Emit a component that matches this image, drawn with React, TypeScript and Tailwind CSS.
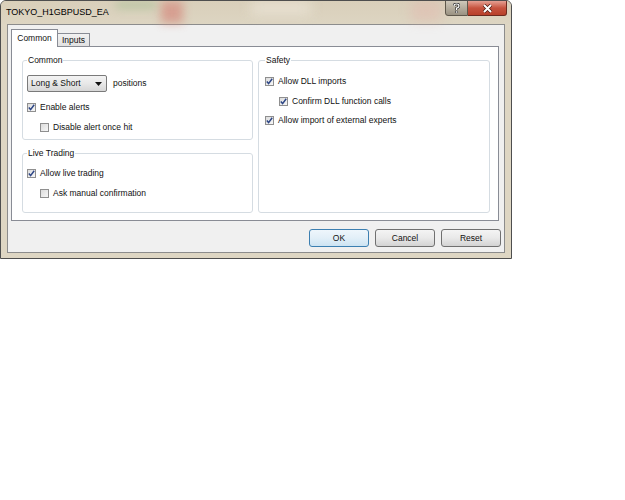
import React from "react";

const font = "font-['Liberation_Sans',Arial,sans-serif]";

function CheckBox({ checked }: { checked?: boolean }) {
  return (
    <span className="flex h-[9px] w-[9px] shrink-0 items-center justify-center border border-[#8f8f8f] bg-gradient-to-br from-[#dcdcdc] to-[#f7f7f7]">
      {checked && (
        <svg width="9" height="9" viewBox="0 0 9 9" className="-m-[1px]">
          <path d="M1.8 4.6 L3.6 6.6 L7.2 1.8" fill="none" stroke="#2d4686" strokeWidth="1.5" />
        </svg>
      )}
    </span>
  );
}

function Option({
  label,
  checked,
  indent,
  className = "",
}: {
  label: string;
  checked?: boolean;
  indent?: boolean;
  className?: string;
}) {
  return (
    <div className={`flex h-[13px] items-center gap-[4px] ${indent ? "pl-[13px]" : ""} ${className}`}>
      <CheckBox checked={checked} />
      <span className="whitespace-nowrap leading-[13px]">{label}</span>
    </div>
  );
}

function Group({
  title,
  className,
  children,
}: {
  title: string;
  className: string;
  children: React.ReactNode;
}) {
  return (
    <fieldset className={`rounded-[3px] border border-[#d5dce2] pl-[4px] ${className}`}>
      <legend className="px-[1px] leading-[10px]">{title}</legend>
      {children}
    </fieldset>
  );
}

function DlgButton({ label, focused }: { label: string; focused?: boolean }) {
  return (
    <button
      className={`flex h-[18px] w-[60px] items-center justify-center rounded-[3px] border leading-none ${
        focused
          ? "border-[#3c7fb1] bg-gradient-to-b from-[#eef6fc] via-[#e2eff8] to-[#cde3f2]"
          : "border-[#707070] bg-gradient-to-b from-[#f4f4f4] via-[#e9e9e9] to-[#d3d3d3]"
      }`}
    >
      {label}
    </button>
  );
}

export default function App() {
  return (
    <div className={`h-[500px] w-[625px] bg-white text-[8.5px] text-[#111] ${font}`}>
      <div className="flex h-[259px] w-[512px] flex-col overflow-hidden rounded-t-[6px] border border-[#4e4e4e] bg-[#ded6c3]">
        {/* title bar over a blurred chart behind the glass */}
        <div className="relative flex h-[23px] items-start bg-gradient-to-b from-[#d9cfba] to-[#ddd5c2]">
          <div className="absolute left-[160px] top-0 h-[22px] w-[22px] bg-[#d48a7e] opacity-70 blur-[5px]" />
          <div className="absolute left-[115px] top-0 h-[8px] w-[40px] bg-[#9fbf8f] opacity-50 blur-[4px]" />
          <div className="absolute left-[410px] top-0 h-[20px] w-[30px] bg-[#e2b8ae] opacity-50 blur-[6px]" />
          <div className="absolute left-[250px] top-0 h-[14px] w-[60px] bg-[#ebe5d8] opacity-70 blur-[6px]" />
          <span className="relative mt-[5px] pl-[5px] text-[9px] leading-[12px] text-black">TOKYO_H1GBPUSD_EA</span>
          <div className="relative ml-auto mr-[4px] flex h-[16px] -translate-y-[1px]">
            <div className="flex w-[23px] items-center justify-center rounded-bl-[3px] border border-[#5f584c] bg-[#a9a293] bg-gradient-to-b from-[#cfc8ba] to-[#9a9282]">
              <svg width="7" height="10" viewBox="0 0 7 10">
                <path d="M1 3 Q1 1 3.5 1 Q6 1 6 3 Q6 4.5 3.5 5.2 V7" fill="none" stroke="#333" strokeWidth="2.6" />
                <path d="M1 3 Q1 1 3.5 1 Q6 1 6 3 Q6 4.5 3.5 5.2 V7" fill="none" stroke="#fff" strokeWidth="1.2" />
                <rect x="2.4" y="8" width="2.2" height="2" fill="#fff" stroke="#333" strokeWidth="0.6" />
              </svg>
            </div>
            <div className="flex w-[39px] items-center justify-center rounded-br-[3px] border border-l-0 border-[#6d2a1f] bg-gradient-to-b from-[#e5a093] via-[#c6533f] to-[#b8402a]">
              <svg width="11" height="9" viewBox="0 0 11 9">
                <path d="M2 1 L9 8 M9 1 L2 8" stroke="#4a1810" strokeWidth="3.4" />
                <path d="M2 1 L9 8 M9 1 L2 8" stroke="#fff" strokeWidth="2" />
              </svg>
            </div>
          </div>
        </div>

        {/* client area */}
        <div className="ml-[6px] flex h-[229px] w-[498px] flex-col border border-[#8c8c8c] bg-[#f0f0f0]">
          <div className="ml-[3px] mt-[4px] flex h-[17px] items-end">
            <div className="relative z-10 -mb-[1px] flex h-[18px] w-[47px] items-center justify-center border border-b-0 border-[#898c95] bg-white pb-[1px]">
              Common
            </div>
            <div className="flex h-[13px] w-[32px] items-center justify-center border border-b-0 border-l-0 border-[#898c95] bg-gradient-to-b from-[#f2f2f2] to-[#e1e1e1]">
              Inputs
            </div>
          </div>

          <div className="ml-[3px] flex h-[175px] w-[488px] gap-[5px] border border-[#898c95] bg-white pl-[10px] pt-[8px]">
            <div className="flex w-[231px] flex-col gap-[8px]">
              <Group title="Common" className="h-[85px]">
                <div className="mt-[10px] flex items-center gap-[6px]">
                  <div className="flex h-[17px] w-[80px] items-center justify-between rounded-[2px] border border-[#7a7a7a] bg-gradient-to-b from-[#f3f3f3] via-[#e8e8e8] to-[#d6d6d6] pl-[3px] pr-[4px]">
                    <span>Long &amp; Short</span>
                    <svg width="7" height="4" viewBox="0 0 7 4">
                      <path d="M0 0 H7 L3.5 4 Z" fill="#111" />
                    </svg>
                  </div>
                  <span>positions</span>
                </div>
                <Option label="Enable alerts" checked className="mt-[9px]" />
                <Option label="Disable alert once hit" indent className="mt-[7px]" />
              </Group>
              <Group title="Live Trading" className="h-[65px]">
                <Option label="Allow live trading" checked className="mt-[9px]" />
                <Option label="Ask manual confirmation" indent className="mt-[7px]" />
              </Group>
            </div>
            <Group title="Safety" className="h-[158px] w-[232px] !pl-[6px]">
              <Option label="Allow DLL imports" checked className="mt-[10px]" />
              <Option label="Confirm DLL function calls" checked indent className="mt-[7px] !pl-[14px]" />
              <Option label="Allow import of external experts" checked className="mt-[6px]" />
            </Group>
          </div>

          <div className="mt-[8px] flex justify-end gap-[6px] pr-[3px]">
            <DlgButton label="OK" focused />
            <DlgButton label="Cancel" />
            <DlgButton label="Reset" />
          </div>
        </div>
      </div>
    </div>
  );
}
